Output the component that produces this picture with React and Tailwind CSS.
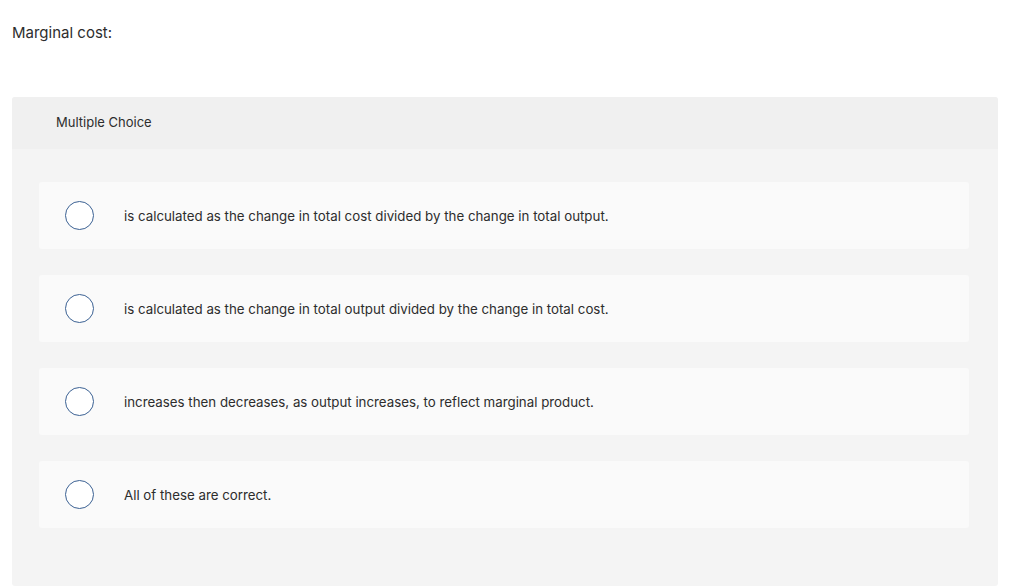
const options = [
  "is calculated as the change in total cost divided by the change in total output.",
  "is calculated as the change in total output divided by the change in total cost.",
  "increases then decreases, as output increases, to reflect marginal product.",
  "All of these are correct.",
];

export default function App() {
  return (
    <div className="w-[1024px] h-[588px] bg-white font-['Inter',sans-serif] text-[#2d2d2d] overflow-hidden">
      <div className="pl-3 pt-[23px] text-[15px] leading-5">Marginal cost:</div>
      <div className="mt-[54px] ml-3 w-[986px] h-[489px] rounded-[3px] bg-[#f4f4f4] overflow-hidden">
        <div className="h-[52px] bg-[#f0f0f0] pl-[44px] flex items-center text-[13px]">Multiple Choice</div>
        <div className="pt-[33px] pl-[27px] pr-[29px] flex flex-col gap-[26px]">
          {options.map((t) => (
            <div key={t} className="h-[67px] rounded-[3px] bg-[#fafafa] flex items-center pl-[26px]">
              <span className="w-[29px] h-[29px] rounded-full border-[1.5px] border-[#3b6193] bg-white shrink-0" />
              <span className="ml-[30px] mt-[2px] text-[13.3px]">{t}</span>
            </div>
          ))}
        </div>
      </div>
    </div>
  );
}
